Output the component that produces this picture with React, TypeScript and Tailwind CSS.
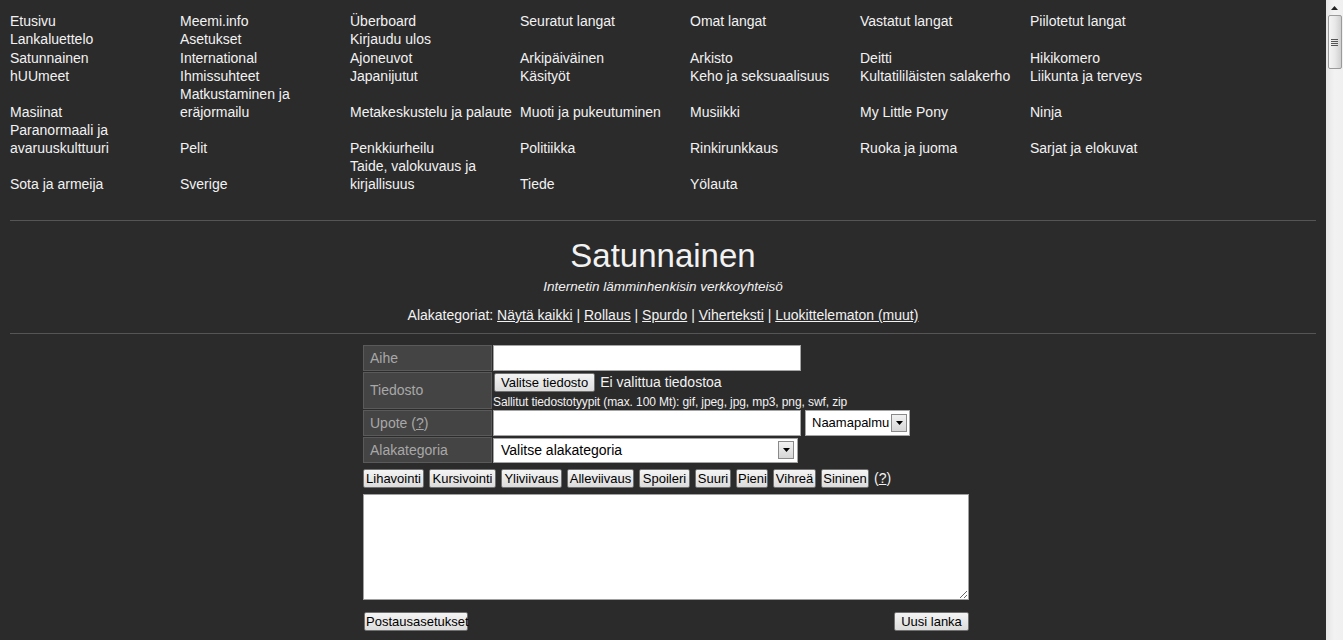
import React from "react";

const FONT = "font-['Liberation_Sans',Arial,sans-serif]";
const SYS = "font-['Liberation_Sans',Arial,sans-serif]";

const navLinks = [
  "Etusivu", "Meemi.info", "Überboard", "Seuratut langat", "Omat langat", "Vastatut langat", "Piilotetut langat",
  "Lankaluettelo", "Asetukset", "Kirjaudu ulos",
];

// items with an explicit line break are given as two strings
const categories: (string | [string, string])[] = [
  "Satunnainen", "International", "Ajoneuvot", "Arkipäiväinen", "Arkisto", "Deitti", "Hikikomero",
  "hUUmeet", "Ihmissuhteet", "Japanijutut", "Käsityöt", "Keho ja seksuaalisuus", "Kultatililäisten salakerho", "Liikunta ja terveys",
  "Masiinat", ["Matkustaminen ja", "eräjormailu"], "Metakeskustelu ja palaute", "Muoti ja pukeutuminen", "Musiikki", "My Little Pony", "Ninja",
  ["Paranormaali ja", "avaruuskulttuuri"], "Pelit", "Penkkiurheilu", "Politiikka", "Rinkirunkkaus", "Ruoka ja juoma", "Sarjat ja elokuvat",
  "Sota ja armeija", "Sverige", ["Taide, valokuvaus ja", "kirjallisuus"], "Tiede", "Yölauta",
];

const subcats = ["Näytä kaikki", "Rollaus", "Spurdo", "Viherteksti", "Luokittelematon (muut)"];

const markup = [
  { label: "Lihavointi", w: "w-[61px]" },
  { label: "Kursivointi", w: "w-[67px]" },
  { label: "Yliviivaus", w: "w-[61px]" },
  { label: "Alleviivaus", w: "w-[67px]" },
  { label: "Spoileri", w: "w-[51px]" },
  { label: "Suuri", w: "w-[36px]" },
  { label: "Pieni", w: "w-[32px]" },
  { label: "Vihreä", w: "w-[43px]" },
  { label: "Sininen", w: "w-[48px]" },
];

function OldButton({ children, className = "" }: { children: React.ReactNode; className?: string }) {
  return (
    <button
      className={`h-[19px] px-[1px] border border-[#707070] rounded-[2px] bg-gradient-to-b from-[#f4f4f4] to-[#dcdcdc] text-black text-[13px] leading-[15px] whitespace-nowrap ${className}`}
    >
      {children}
    </button>
  );
}

function SelectArrow() {
  return (
    <span className="flex items-center justify-center w-[16px] h-[18px] border border-[#8a8a8a] bg-gradient-to-b from-[#f2f2f2] to-[#d6d6d6]">
      <svg width="7" height="4" viewBox="0 0 7 4">
        <path d="M0 0h7L3.5 4z" fill="#000" />
      </svg>
    </span>
  );
}

function LabelCell({ children, tall = false }: { children: React.ReactNode; tall?: boolean }) {
  return (
    <div
      className={`flex items-center pl-[6px] bg-[#444444] border border-[#5a5a5a] text-[#a8a8a8] text-[14px] ${tall ? "h-[37px]" : "h-[26px]"}`}
    >
      {children}
    </div>
  );
}

function Scrollbar() {
  return (
    <div className="w-[17px] shrink-0 h-[640px] bg-gradient-to-r from-[#e6e6e6] via-[#f2f2f2] to-[#f0f0f0] flex flex-col items-center">
      <div className="h-[15px] w-full flex items-center justify-center">
        <svg width="7" height="4" viewBox="0 0 7 4">
          <path d="M3.5 0L7 4H0z" fill="#222" />
        </svg>
      </div>
      <div className="w-[14px] h-[54px] rounded-[2px] border border-[#9a9a9a] bg-gradient-to-r from-[#f4f4f4] via-[#e8e8e8] to-[#cfcfcf] flex items-center justify-center">
        <div className="flex flex-col gap-[1px]">
          <div className="w-[7px] h-[1px] bg-[#555]" />
          <div className="w-[7px] h-[1px] bg-[#555]" />
          <div className="w-[7px] h-[1px] bg-[#555]" />
          <div className="w-[7px] h-[1px] bg-[#555]" />
        </div>
      </div>
    </div>
  );
}

export default function App() {
  return (
    <div className={`flex h-[640px] overflow-hidden bg-[#2b2b2b] text-[#f2f2f2] ${FONT}`}>
      <div className="flex-1 min-w-0 px-[10px] pt-[12px]">
        {/* navigation */}
        <div className="grid grid-cols-[repeat(7,170px)] items-end text-[14px] leading-[18px]">
          {navLinks.map((l) => (
            <a key={l} className="whitespace-nowrap cursor-pointer">{l}</a>
          ))}
        </div>
        <div className="grid grid-cols-[repeat(7,170px)] items-end text-[14px] leading-[18px] mt-[1px]">
          {categories.map((c) => (
            <a key={typeof c === "string" ? c : c[0]} className="whitespace-nowrap cursor-pointer">
              {typeof c === "string" ? c : (
                <>
                  {c[0]}
                  <br />
                  {c[1]}
                </>
              )}
            </a>
          ))}
        </div>

        <hr className="mt-[27px] border-t border-[#555555]" />

        <div className="text-center">
          <h1 className="mt-[16px] text-[33px] leading-[37px]">Satunnainen</h1>
          <div className="mt-[4px] text-[13.5px] leading-[18px] italic">Internetin lämminhenkisin verkkoyhteisö</div>
          <div className="mt-[10px] text-[14px] leading-[18px]">
            Alakategoriat:{" "}
            {subcats.map((s, i) => (
              <span key={s}>
                {i > 0 && " | "}
                <a className="underline cursor-pointer">{s}</a>
              </span>
            ))}
          </div>
        </div>

        <hr className="mt-[9px] border-t border-[#555555]" />

        {/* posting form */}
        <div className="ml-[353px] w-[606px] mt-[11px]">
          <div className="grid grid-cols-[129px_auto] gap-x-[1px] gap-y-[1px]">
            <LabelCell>Aihe</LabelCell>
            <div className="flex items-center">
              <input className="w-[308px] h-[26px] bg-white border border-[#a5a5a5] outline-none" />
            </div>

            <LabelCell tall>Tiedosto</LabelCell>
            <div className="flex flex-col justify-center">
              <div className={`flex items-center gap-[5px] text-[14px] ${SYS}`}>
                <OldButton className={`ml-[1px] px-[6px] ${SYS} text-[#111]`}>Valitse tiedosto</OldButton>
                <span>Ei valittua tiedostoa</span>
              </div>
              <div className="text-[12px] leading-[14px] mt-[2px] tracking-[-0.1px]">
                Sallitut tiedostotyypit (max. 100 Mt): gif, jpeg, jpg, mp3, png, swf, zip
              </div>
            </div>

            <LabelCell>
              Upote (<a className="underline">?</a>)
            </LabelCell>
            <div className="flex items-center gap-[4px]">
              <input className="w-[308px] h-[26px] bg-white border border-[#a5a5a5] outline-none" />
              <div className="w-[105px] h-[26px] bg-white border border-[#a5a5a5] flex items-center justify-between pl-[6px] pr-[2px] text-black text-[13px]">
                <span>Naamapalmu</span>
                <SelectArrow />
              </div>
            </div>

            <LabelCell>Alakategoria</LabelCell>
            <div className="flex items-center">
              <div className="w-[305px] h-[25px] bg-white border border-[#a5a5a5] flex items-center justify-between pl-[7px] pr-[3px] text-black text-[14px]">
                <span>Valitse alakategoria</span>
                <SelectArrow />
              </div>
            </div>
          </div>

          <div className="flex items-center gap-[5px] mt-[5px] text-[14px]">
            {markup.map((m) => (
              <OldButton key={m.label} className={m.w}>{m.label}</OldButton>
            ))}
            <span>
              (<a className="underline">?</a>)
            </span>
          </div>

          <textarea className="block w-[606px] h-[106px] mt-[5px] bg-white border border-[#a0a0a0] outline-none resize" />

          <div className="flex justify-between mt-[12px]">
            <OldButton className="ml-[1px] w-[104px]">Postausasetukset</OldButton>
            <OldButton className="w-[75px] px-[4px]">Uusi lanka</OldButton>
          </div>
        </div>
      </div>
      <Scrollbar />
    </div>
  );
}
